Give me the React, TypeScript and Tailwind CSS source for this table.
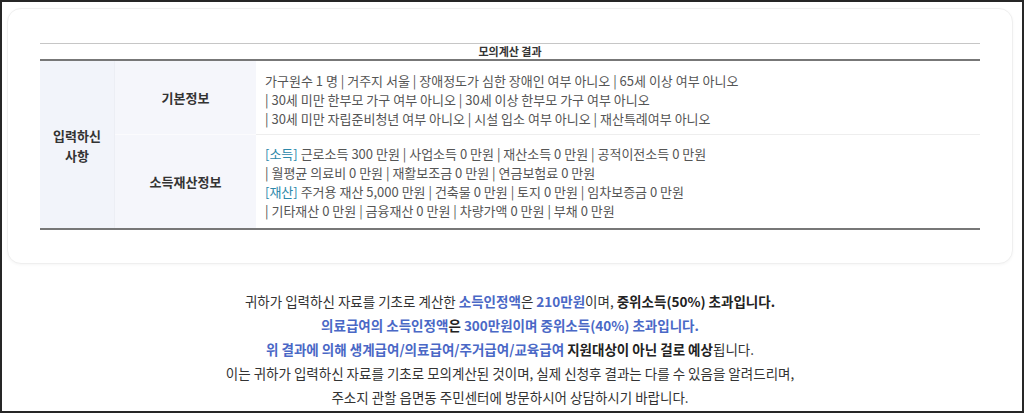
import React from "react";

const font = { fontFamily: '"Noto Sans CJK KR", "Noto Sans", sans-serif' };

function Row({
  label,
  lines,
  last,
}: {
  label: string;
  lines: React.ReactNode[];
  last?: boolean;
}) {
  return (
    <>
      <div
        className={`flex items-center justify-center bg-[#f5f6fb] text-[13px] font-bold text-[#333] ${
          last ? "" : "border-b border-[#fbfbfd]"
        }`}
      >
        {label}
      </div>
      <div
        className={`px-[9px] text-[13px] leading-[19px] text-[#555] ${
          last ? "pt-[9px] pb-[8px]" : "border-b border-[#eeeeee] pt-[10px] pb-[6px]"
        }`}
      >
        {lines.map((l, i) => (
          <div key={i}>{l}</div>
        ))}
      </div>
    </>
  );
}

export default function App() {
  const tag = "text-[#2d88aa]";
  return (
    <div
      className="h-[413px] overflow-hidden border-2 border-[#262626] bg-white pl-[5px] pr-[9px] pt-[6px]"
      style={font}
    >
      <div className="h-[256px] rounded-[14px] border border-[#efefef] bg-white px-[32px] pt-[34px] shadow-[0_1px_3px_rgba(0,0,0,0.04)]">
        <div className="border-t border-[#c6c6c6]">
          <div className="flex h-[17px] items-center justify-center border-b-2 border-[#777] text-[11px] font-bold text-[#333]">
            모의계산 결과
          </div>
          <div className="grid grid-cols-[75px_141px_1fr] border-b-2 border-[#777]">
            <div className="row-span-2 flex flex-col items-center justify-center border-r border-[#eceef4] bg-[#f2f4fa] pt-[2px] text-[13px] font-bold leading-[20px] text-[#333]">
              <span>입력하신</span>
              <span>사항</span>
            </div>
            <Row
              label="기본정보"
              lines={[
                "가구원수 1 명 | 거주지 서울 | 장애정도가 심한 장애인 여부 아니오 | 65세 이상 여부 아니오",
                "| 30세 미만 한부모 가구 여부 아니오 | 30세 이상 한부모 가구 여부 아니오",
                "| 30세 미만 자립준비청년 여부 아니오 | 시설 입소 여부 아니오 | 재산특례여부 아니오",
              ]}
            />
            <Row
              label="소득재산정보"
              last
              lines={[
                <>
                  <span className={tag}>[소득]</span> 근로소득 300 만원 | 사업소득 0 만원 | 재산소득 0 만원 | 공적이전소득 0 만원
                </>,
                "| 월평균 의료비 0 만원 | 재활보조금 0 만원 | 연금보험료 0 만원",
                <>
                  <span className={tag}>[재산]</span> 주거용 재산 5,000 만원 | 건축물 0 만원 | 토지 0 만원 | 임차보증금 0 만원
                </>,
                "| 기타재산 0 만원 | 금융재산 0 만원 | 차량가액 0 만원 | 부채 0 만원",
              ]}
            />
          </div>
        </div>
      </div>

      <div className="mt-[25px] text-center text-[13.5px] leading-[24px] text-[#333]">
        <p>
          귀하가 입력하신 자료를 기초로 계산한{" "}
          <span className="font-bold text-[#4a68c6]">소득인정액</span>은{" "}
          <span className="font-bold text-[#4a68c6]">210만원</span>이며,{" "}
          <span className="font-bold text-[#222]">중위소득(50%) 초과입니다.</span>
        </p>
        <p className="font-bold">
          <span className="text-[#4a68c6]">의료급여의 소득인정액</span>
          <span className="text-[#222]">은 </span>
          <span className="text-[#4a68c6]">300만원이며 중위소득(40%) 초과입니다.</span>
        </p>
        <p>
          <span className="font-bold text-[#4a68c6]">
            위 결과에 의해 생계급여/의료급여/주거급여/교육급여
          </span>{" "}
          <span className="font-bold text-[#222]">지원대상이 아닌 걸로 예상</span>됩니다.
        </p>
        <p>
          이는 귀하가 입력하신 자료를 기초로 모의계산된 것이며, 실제 신청후 결과는 다를 수 있음을 알려드리며,
        </p>
        <p>주소지 관할 읍면동 주민센터에 방문하시어 상담하시기 바랍니다.</p>
      </div>
    </div>
  );
}
